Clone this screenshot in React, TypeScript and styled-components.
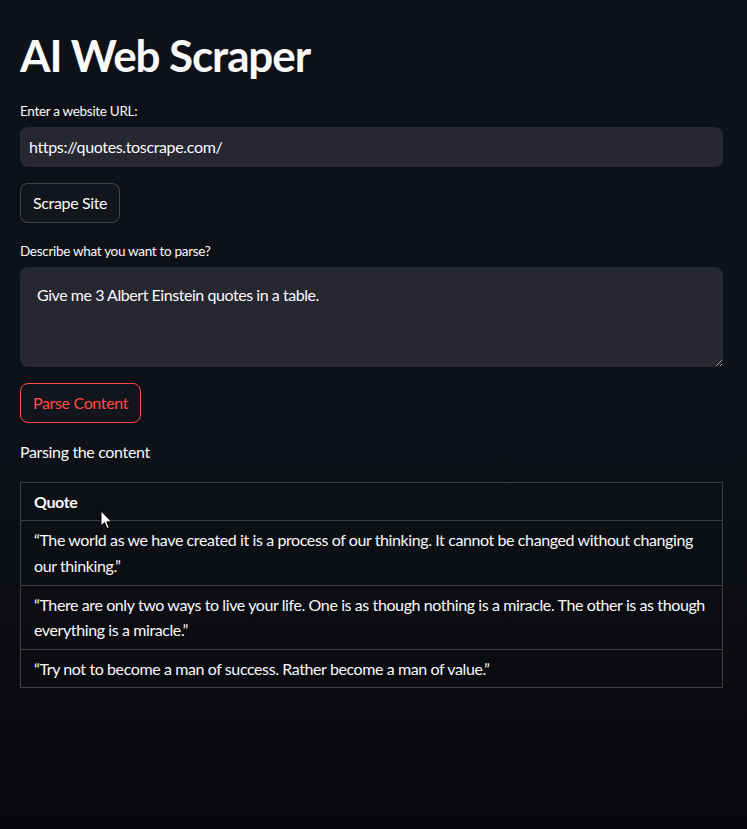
import React from 'react';
import styled, { createGlobalStyle } from 'styled-components';

const GlobalStyle = createGlobalStyle`
  html, body {
    margin: 0;
    padding: 0;
    height: 100%;
  }
  body {
    background: linear-gradient(180deg, #0e1117 0%, #0e1117 55%, #07080b 100%);
    color: #fafafa;
    font-family: Lato, "Noto Sans", sans-serif;
    letter-spacing: -0.35px;
  }
  #root {
    min-height: 829px;
  }
`;

const quotes = [
  '“The world as we have created it is a process of our thinking. It cannot be changed without changing our thinking.”',
  '“There are only two ways to live your life. One is as though nothing is a miracle. The other is as though everything is a miracle.”',
  '“Try not to become a man of success. Rather become a man of value.”',
];

export default function App() {
  return (
    <>
      <GlobalStyle />
      <Main>
        <Title>AI Web Scraper</Title>

        <Field>
          <Label>Enter a website URL:</Label>
          <TextInput defaultValue="https://quotes.toscrape.com/" />
        </Field>

        <Row>
          <Button>Scrape Site</Button>
        </Row>

        <Field>
          <Label>Describe what you want to parse?</Label>
          <TextArea defaultValue="Give me 3 Albert Einstein quotes in a table." />
        </Field>

        <Row>
          <Button $active>Parse Content</Button>
        </Row>

        <Text>Parsing the content</Text>

        <TableWrap>
          <Table>
            <thead>
              <tr>
                <Th>Quote</Th>
              </tr>
            </thead>
            <tbody>
              {quotes.map((q) => (
                <tr key={q}>
                  <Td>{q}</Td>
                </tr>
              ))}
            </tbody>
          </Table>
          <Cursor width="13" height="20" viewBox="0 0 13 20">
            <path d="M1 1 L1 16 L4.5 12.5 L7 18.5 L9.2 17.6 L6.8 11.8 L11.5 11.8 Z"
                  fill="#fff" stroke="#000" strokeWidth="1" strokeLinejoin="round" />
          </Cursor>
        </TableWrap>
      </Main>
    </>
  );
}

const Main = styled.div`
  width: 703px;
  padding: 22px 24px 0 20px;
  display: flex;
  flex-direction: column;
  gap: 16px;
`;

const Title = styled.h1`
  margin: 0;
  padding: 7px 0 1px;
  font-size: 44px;
  font-weight: 700;
  line-height: 1.2;
  letter-spacing: -1.1px;
  color: #fafafa;
`;

const Field = styled.div`
  display: flex;
  flex-direction: column;
`;

const Label = styled.label`
  font-size: 13.5px;
  line-height: 24px;
  min-height: 24px;
  margin-bottom: 4px;
  letter-spacing: -0.3px;
  color: #fafafa;
`;

const TextInput = styled.input`
  box-sizing: border-box;
  height: 40px;
  width: 100%;
  border: none;
  border-radius: 8px;
  background: #262730;
  color: #fafafa;
  font-family: inherit;
  font-size: 16px;
  letter-spacing: inherit;
  padding: 0 9px;
  outline: none;
`;

const TextArea = styled.textarea`
  box-sizing: border-box;
  height: 100px;
  width: 100%;
  border: none;
  border-radius: 8px;
  background: #262730;
  color: #fafafa;
  font-family: inherit;
  font-size: 16px;
  letter-spacing: -0.45px;
  line-height: 1.5;
  padding: 16px 17px;
  outline: none;
  resize: vertical;
`;

const Row = styled.div`
  display: flex;
`;

const Button = styled.button<{ $active?: boolean }>`
  box-sizing: border-box;
  height: 40px;
  padding: 0 12px;
  border-radius: 8px;
  background: #12151c;
  border: 1px solid ${(p) => (p.$active ? 'rgb(255, 75, 75)' : 'rgba(250, 250, 250, 0.2)')};
  color: ${(p) => (p.$active ? 'rgb(255, 75, 75)' : '#fafafa')};
  font-family: inherit;
  font-size: 16px;
  letter-spacing: inherit;
  cursor: pointer;
`;

const Text = styled.p`
  margin: 0;
  font-size: 16px;
  line-height: 24px;
  padding-top: 1px;
`;

const TableWrap = styled.div`
  position: relative;
  margin-top: 2px;
`;

const Table = styled.table`
  width: 100%;
  border-collapse: collapse;
  font-size: 16px;
  line-height: 1.6;
  letter-spacing: -0.4px;
  color: #fafafa;
`;

const Th = styled.th`
  text-align: left;
  font-weight: 700;
  padding: 6px 8px 6px 13px;
  border: 1px solid #3d3f45;
`;

const Td = styled.td`
  padding: 6px 8px 6px 13px;
  border: 1px solid #3d3f45;
`;

const Cursor = styled.svg`
  position: absolute;
  left: 80px;
  top: 28px;
  pointer-events: none;
`;
